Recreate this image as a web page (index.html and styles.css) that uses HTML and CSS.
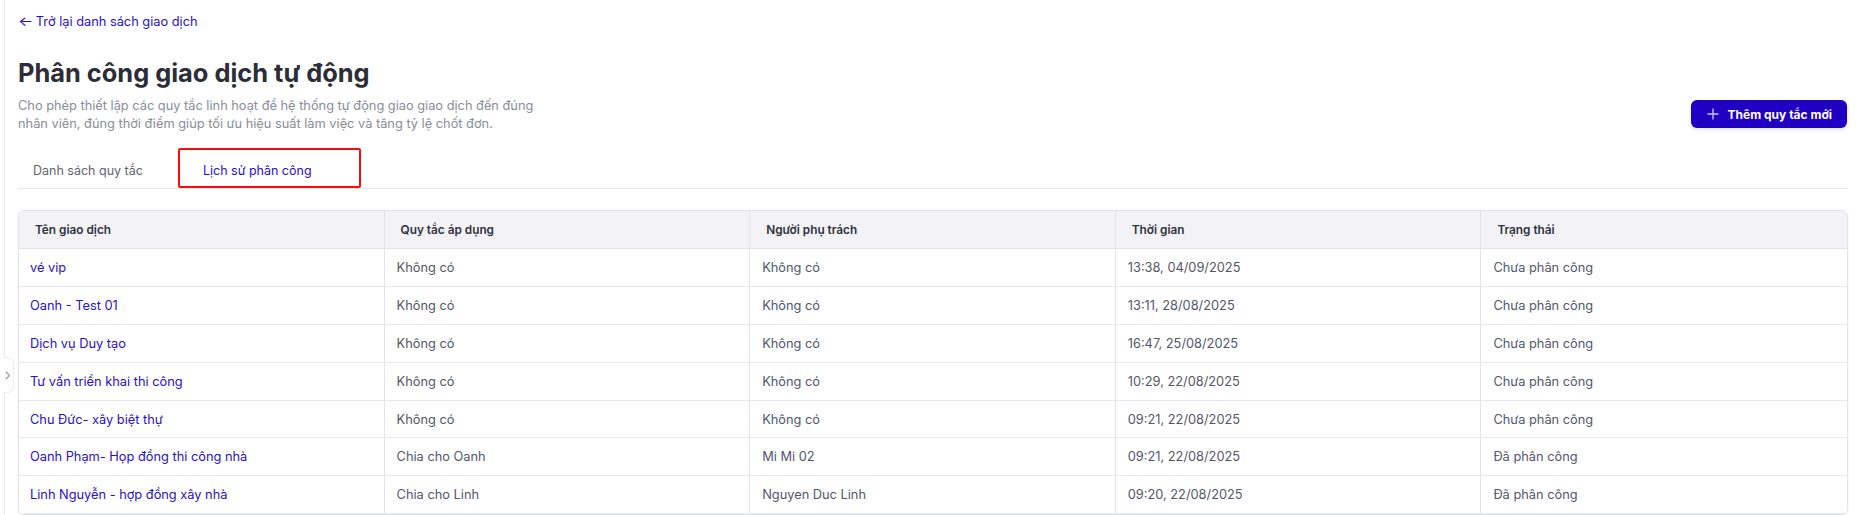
FILE: index.html
```html
<!DOCTYPE html>
<html lang="vi">
<head>
<meta charset="utf-8">
<title>Phân công giao dịch tự động</title>
<link rel="stylesheet" href="styles.css">
</head>
<body>
<div class="app">
  <aside class="sidebar">
    <button class="sidebar-toggle" type="button" aria-label="Mở rộng">
      <svg width="6" height="9" viewBox="0 0 6 9"><path d="M1 1l3.5 3.5L1 8" fill="none" stroke="#9a9aa4" stroke-width="1.1" stroke-linecap="round" stroke-linejoin="round"/></svg>
    </button>
  </aside>
  <main class="main">
    <a class="back-link" href="#"><span class="back-arrow">←</span> Trở lại danh sách giao dịch</a>

    <div class="page-header">
      <div class="page-header-text">
        <h1 class="page-title">Phân công giao dịch tự động</h1>
        <p class="page-desc">Cho phép thiết lập các quy tắc linh hoạt để hệ thống tự động giao giao dịch đến đúng nhân viên, đúng thời điểm giúp tối ưu hiệu suất làm việc và tăng tỷ lệ chốt đơn.</p>
      </div>
      <button class="btn-primary" type="button">
        <svg class="btn-icon" width="12" height="12" viewBox="0 0 12 12"><path d="M6 1v10M1 6h10" stroke="#cfc8ff" stroke-width="1.3" stroke-linecap="round"/></svg>
        <span>Thêm quy tắc mới</span>
      </button>
    </div>

    <nav class="tabs">
      <a class="tab" href="#">Danh sách quy tắc</a>
      <a class="tab tab-active" href="#">Lịch sử phân công<span class="highlight-box"></span></a>
    </nav>

    <div class="table-wrap">
      <table class="data-table">
        <thead>
          <tr>
            <th>Tên giao dịch</th>
            <th>Quy tắc áp dụng</th>
            <th>Người phụ trách</th>
            <th>Thời gian</th>
            <th>Trạng thái</th>
          </tr>
        </thead>
        <tbody>
          <tr><td class="deal">vé vip</td><td>Không có</td><td>Không có</td><td>13:38, 04/09/2025</td><td>Chưa phân công</td></tr>
          <tr><td class="deal">Oanh - Test 01</td><td>Không có</td><td>Không có</td><td>13:11, 28/08/2025</td><td>Chưa phân công</td></tr>
          <tr><td class="deal">Dịch vụ Duy tạo</td><td>Không có</td><td>Không có</td><td>16:47, 25/08/2025</td><td>Chưa phân công</td></tr>
          <tr><td class="deal">Tư vấn triển khai thi công</td><td>Không có</td><td>Không có</td><td>10:29, 22/08/2025</td><td>Chưa phân công</td></tr>
          <tr><td class="deal">Chu Đức- xây biệt thự</td><td>Không có</td><td>Không có</td><td>09:21, 22/08/2025</td><td>Chưa phân công</td></tr>
          <tr><td class="deal">Oanh Phạm- Họp đồng thi công nhà</td><td>Chia cho Oanh</td><td>Mi Mi 02</td><td>09:21, 22/08/2025</td><td>Đã phân công</td></tr>
          <tr><td class="deal">Linh Nguyễn - hợp đồng xây nhà</td><td>Chia cho Linh</td><td>Nguyen Duc Linh</td><td>09:20, 22/08/2025</td><td>Đã phân công</td></tr>
        </tbody>
      </table>
    </div>
  </main>
</div>
</body>
</html>
```

FILE: styles.css
```css
* { box-sizing: border-box; }

html, body {
  margin: 0;
  padding: 0;
  background: #ffffff;
  font-family: Inter, "Noto Sans", "Liberation Sans", sans-serif;
  color: #2b2d38;
}

.app {
  display: flex;
  min-height: 515px;
}

.sidebar {
  position: relative;
  width: 5px;
  flex: 0 0 5px;
  border-right: 1px solid #e9e9ee;
}

.sidebar-toggle {
  position: absolute;
  left: 3px;
  top: 357px;
  width: 11px;
  height: 36px;
  padding: 0;
  background: #ffffff;
  border: 1px solid #ececf1;
  border-left: none;
  border-radius: 0 7px 7px 0;
  display: flex;
  align-items: center;
  justify-content: center;
  cursor: pointer;
}

.main {
  flex: 1;
  min-width: 0;
  padding: 10px 17px 0 13px;
}

.back-link {
  display: inline-block;
  font-size: 12.8px;
  line-height: 20px;
  color: #2a10c4;
  text-decoration: none;
}

.back-arrow {
  display: inline-block;
  transform: scaleX(1.25);
  transform-origin: left center;
  margin-right: 2px;
}

.page-header {
  display: flex;
  justify-content: space-between;
  align-items: flex-end;
  margin-top: 25px;
}

.page-title {
  margin: 0;
  font-size: 25.4px;
  line-height: 32px;
  font-weight: 700;
  color: #2b2d38;
}

.page-desc {
  margin: 8px 0 0;
  max-width: 530px;
  font-size: 12.8px;
  line-height: 18px;
  color: #8a8d99;
}

.btn-primary {
  display: flex;
  align-items: center;
  gap: 9px;
  height: 28px;
  margin-bottom: 5px;
  margin-right: 1px;
  padding: 0 15px 0 16px;
  border: none;
  border-radius: 6px;
  background: #2000c2;
  color: #ffffff;
  font-family: inherit;
  font-size: 12px;
  font-weight: 700;
  box-shadow: 0 2px 4px rgba(32, 0, 194, 0.12);
  cursor: pointer;
}

.btn-icon { display: block; }

.tabs {
  display: flex;
  gap: 30px;
  margin-top: 15px;
  border-bottom: 1px solid #e4e4ea;
}

.tab {
  position: relative;
  padding: 13px 15px 7px;
  font-size: 12.5px;
  line-height: 20px;
  color: #5f6370;
  text-decoration: none;
}

.tab-active {
  color: #2a10c4;
}

.highlight-box {
  position: absolute;
  left: -10px;
  right: -34px;
  top: 0;
  bottom: 0;
  border: 2px solid #ff0a0a;
  border-radius: 2px;
  pointer-events: none;
}

.table-wrap {
  margin-top: 21px;
  border: 1px solid #e3e3eb;
  border-radius: 6px;
  overflow: hidden;
  box-shadow: 0 1px 3px rgba(20, 20, 60, 0.06);
}

.data-table {
  width: 100%;
  table-layout: fixed;
  border-collapse: separate;
  border-spacing: 0;
}

.data-table th,
.data-table td {
  text-align: left;
  border-right: 1px solid #e3e3eb;
  border-bottom: 1px solid #e8e8ef;
  white-space: nowrap;
  overflow: hidden;
  text-overflow: ellipsis;
}

.data-table th:last-child,
.data-table td:last-child {
  border-right: none;
}

.data-table th {
  height: 38px;
  padding: 0 16px;
  background: #f2f2f7;
  font-size: 11.8px;
  font-weight: 600;
  color: #30323c;
  border-bottom-color: #e3e3eb;
}

.data-table td {
  height: 37.9px;
  padding: 0 12px;
  font-size: 12.8px;
  color: #53566a;
}

.data-table td.deal {
  color: #2a10c4;
  padding-left: 11px;
}
```
